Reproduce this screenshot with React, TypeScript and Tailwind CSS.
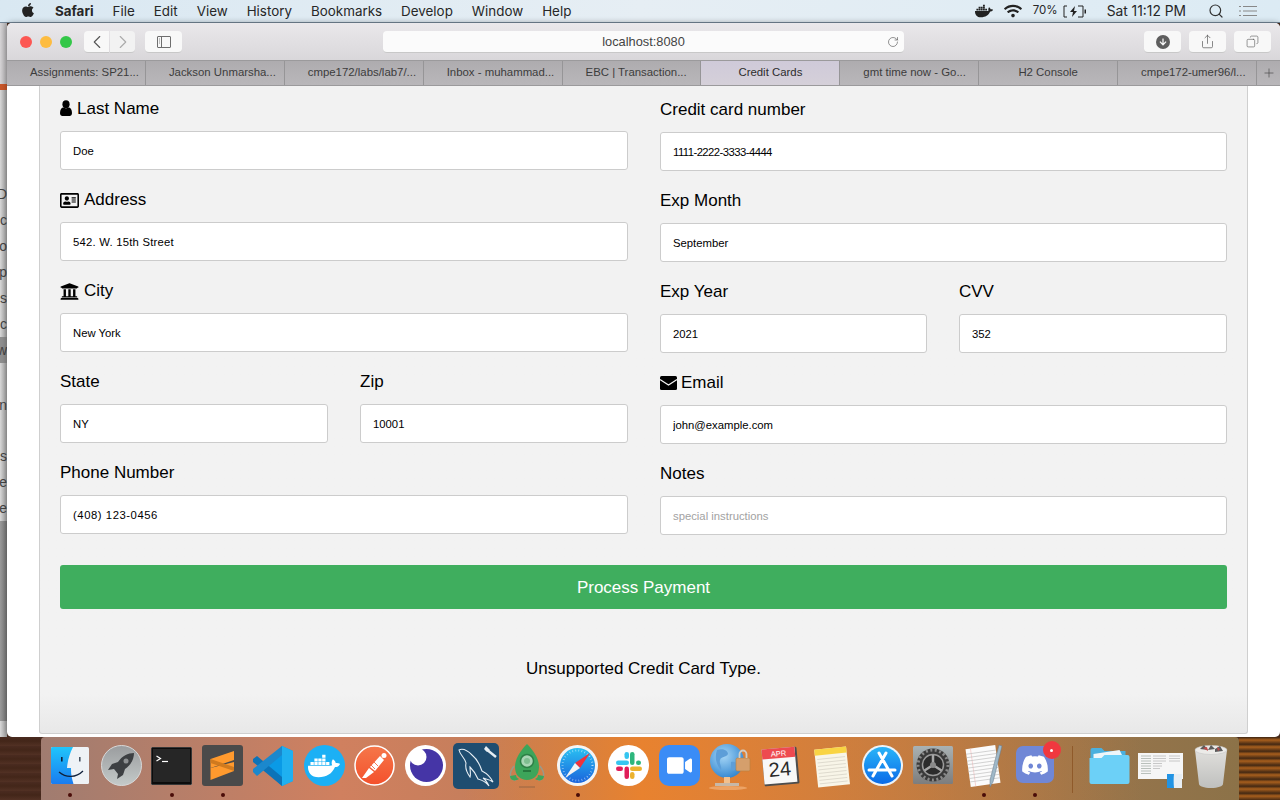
import { FaApple, FaRegAddressCard, FaUniversity, FaDocker, FaDiscord, FaVideo, FaWifi, FaArrowDown } from "react-icons/fa";
import { ChevronLeft, ChevronRight, RotateCw, Search, Share, Copy, Plus } from "lucide-react";
import type { ReactNode } from "react";

const font = "font-['Liberation_Sans',Arial,sans-serif]";

const menuItems = ["File", "Edit", "View", "History", "Bookmarks", "Develop", "Window", "Help"];

const tabs = [
  { label: "Assignments: SP21...", pad: true },
  { label: "Jackson Unmarsha...", pad: true },
  { label: "cmpe172/labs/lab7/...", pad: true },
  { label: "Inbox - muhammad...", pad: true },
  { label: "EBC | Transaction...", pad: true },
  { label: "Credit Cards", active: true },
  { label: "gmt time now - Go...", pad: true },
  { label: "H2 Console" },
  { label: "cmpe172-umer96/l...", pad: true },
];

const behindRows = [
  { text: "", h: 91 },
  { text: "rD", h: 26 },
  { text: "c", h: 26 },
  { text: "o", h: 26 },
  { text: "p", h: 26 },
  { text: "es", h: 26 },
  { text: "oc", h: 26 },
  { text: "ow", h: 26, dark: true },
  { text: "", h: 29 },
  { text: "n", h: 26 },
  { text: "", h: 25 },
  { text: "s", h: 26 },
  { text: "e", h: 26 },
  { text: "e", h: 26 },
];

function Field({ label, icon, value, placeholder, track = "" }: { label: string; icon?: ReactNode; value?: string; placeholder?: string; track?: string }) {
  return (
    <div className="min-w-0">
      <label className="flex h-6 items-center gap-[5px] pt-[2px] text-[17px] leading-6 text-black">
        {icon}
        {label}
      </label>
      <input
        readOnly
        value={value ?? ""}
        placeholder={placeholder}
        className={`mt-[11px] mb-[17px] block h-[39px] w-full rounded-[3px] border border-[#cccccc] bg-white px-3 text-[11.3px] text-black outline-none placeholder:text-[#a2a2a2] ${track}`}
      />
    </div>
  );
}

function Slot({ children, dot }: { children: ReactNode; dot?: boolean }) {
  return (
    <div className="relative flex h-[62px] w-[50.75px] shrink-0 items-start justify-center pt-[8px]">
      {children}
      {dot && <span className="absolute bottom-[2px] left-1/2 h-[4px] w-[4px] -translate-x-1/2 rounded-full bg-[#4a0c08]" />}
    </div>
  );
}

function UserGlyph() {
  return (
    <svg width="12" height="16" viewBox="0 0 12 16" className="-mt-[2px]">
      <ellipse cx="6" cy="4.200" rx="3.600" ry="4" fill="#000" />
      <path d="M0 13C0 9.500 1.500 7.500 3.500 7.500C4.500 8.500 7.500 8.500 8.500 7.500C10.500 7.500 12 9.500 12 13C12 15 11 16 9.500 16H2.500C1 16 0 15 0 13Z" fill="#000" />
    </svg>
  );
}

function MailGlyph() {
  return (
    <svg width="17" height="14" viewBox="0 0 17 14" className="-mt-[1px] -mr-px">
      <rect width="17" height="14" rx="1.500" fill="#000" />
      <path d="M0 3.500L8.500 9L17 3.500" fill="none" stroke="#f2f2f2" strokeWidth="1.200" />
    </svg>
  );
}

function Finder() {
  return (
    <svg width="38" height="37" viewBox="0 0 38 37" className="mt-[2px]">
      <defs>
        <linearGradient id="fb" x1="0" y1="0" x2="0" y2="1"><stop offset="0" stopColor="#20c5fb" /><stop offset="1" stopColor="#1a7cf0" /></linearGradient>
      </defs>
      <rect width="38" height="37" rx="1.500" fill="#eef2f6" />
      <path d="M0 1.500A1.500 1.500 0 0 1 1.500 0H22C18 8 16.500 15 16 21H20C19.800 27 21 32 22.500 37H1.500A1.500 1.500 0 0 1 0 35.500Z" fill="url(#fb)" />
      <path d="M8 25C15 31 25 31 32 24" fill="none" stroke="#10203a" strokeWidth="1.200" />
      <rect x="10" y="10" width="1.600" height="4.500" fill="#10203a" />
      <rect x="28" y="10" width="1.600" height="4.500" fill="#4b5563" />
    </svg>
  );
}

function Launchpad() {
  return (
    <svg width="41" height="41" viewBox="0 0 41 41">
      <defs>
        <linearGradient id="lp" x1="0" y1="0" x2="0" y2="1"><stop offset="0" stopColor="#9a9c9e" /><stop offset="1" stopColor="#c4cac9" /></linearGradient>
      </defs>
      <circle cx="20.500" cy="20.500" r="20" fill="url(#lp)" stroke="#d8d8d8" />
      <path d="M33 8C27 8 21 11 17 17L11 19L7 25L13 24L17 29L16 34L22 30L24 24C30 20 33 14 33 8Z" fill="#3d4043" />
      <circle cx="25" cy="16" r="2.500" fill="#8d9092" />
    </svg>
  );
}

function Terminal() {
  return (
    <svg width="41" height="38" viewBox="0 0 41 38" className="mt-[2px]">
      <rect width="41" height="38" rx="1.500" fill="#0c0c0c" stroke="#9a9a9a" strokeWidth="0.600" />
      <rect x="2" y="2" width="37" height="33" fill="#262626" />
      <path d="M5.500 9L9.500 11.500L5.500 14" fill="none" stroke="#fff" strokeWidth="1.200" />
      <path d="M11 14.500H17" stroke="#fff" strokeWidth="1.200" />
    </svg>
  );
}

function Sublime() {
  return (
    <svg width="41" height="41" viewBox="0 0 41 41">
      <rect width="41" height="41" rx="3" fill="#4a4a4a" />
      <path d="M8.500 14L32 6V15L8.500 23Z" fill="#ff9a2e" />
      <path d="M8.500 23L32 17V26L8.500 35Z" fill="#ff9a2e" />
      <path d="M8.500 14L32 22V26L8.500 18Z" fill="#d07a1e" />
    </svg>
  );
}

function VsCode() {
  return (
    <svg width="42" height="42" viewBox="0 0 42 42">
      <path d="M30 1L41 6V36L30 41L10 22Z" fill="#0a9ae6" />
      <path d="M30 1V41L41 36V6Z" fill="#1fb0f0" />
      <path d="M1 14L5 11L30 32V41L1 17Z" fill="#0c73b8" />
      <path d="M1 27L5 31L30 10V1L1 24Z" fill="#1b88cd" />
    </svg>
  );
}

function Docker() {
  return (
    <div className="flex h-[41px] w-[41px] items-center justify-center rounded-full bg-[#1cb0f5] text-white">
      <FaDocker size={32} />
    </div>
  );
}

function Postman() {
  return (
    <svg width="41" height="41" viewBox="0 0 41 41">
      <defs>
        <linearGradient id="pm" x1="0" y1="0" x2="0" y2="1"><stop offset="0" stopColor="#f5774a" /><stop offset="1" stopColor="#f4512c" /></linearGradient>
      </defs>
      <circle cx="20.500" cy="20.500" r="19.500" fill="url(#pm)" stroke="#fff" strokeWidth="1.500" />
      <circle cx="30" cy="10.500" r="2.500" fill="#fff" />
      <path d="M26 11L30 15L21 26L16 22ZM15 23L20 27L12 33L8 33Z" fill="#fff" />
      <path d="M20 17L24 21M17 20L21 24" stroke="#f4592f" strokeWidth="0.800" />
    </svg>
  );
}

function Lens() {
  return (
    <svg width="41" height="41" viewBox="0 0 41 41">
      <circle cx="20.500" cy="20.500" r="20.500" fill="#fff" />
      <circle cx="21.500" cy="20.500" r="16.500" fill="#4535a6" />
      <circle cx="13" cy="12" r="8.500" fill="#fff" />
    </svg>
  );
}

function MySqlIcon() {
  return (
    <svg width="46" height="46" viewBox="0 0 46 46" className="-mt-[2px]">
      <rect width="46" height="46" rx="5" fill="#1f4d70" />
      <path d="M6 7C10 5 15 8 19 12C24 16 27 22 29 28C33 30 37 33 40 39C36 36 33 36 30 35C33 37 35 41 36 43C33 39 29 37 25 36C23 31 20 27 17 24C17 28 18 31 17 34C14 30 12 25 13 20C12 15 7 12 6 7Z" fill="none" stroke="#e6eef4" strokeWidth="1.100" />
      <path d="M33 6L43 14" stroke="#e6eef4" strokeWidth="2.500" />
      <path d="M33 3L31 6L34 9L37 7Z" fill="#e6eef4" />
    </svg>
  );
}

function Rocket() {
  return (
    <svg width="40" height="47" viewBox="0 0 40 47" className="-mt-[1px]">
      <path d="M7 22C1 30 3 36 9 36M33 22C39 30 37 36 31 36" fill="none" stroke="#9a9a88" strokeWidth="1.500" />
      <path d="M20 0C27 7 32 15 32 23C32 31 27 36 20 36C13 36 8 31 8 23C8 15 13 7 20 0Z" fill="#3da55a" />
      <circle cx="20" cy="17" r="6.500" fill="#a9d6b4" stroke="#2d7f45" strokeWidth="1.500" />
      <circle cx="20" cy="17" r="3" fill="#7fbe90" />
      <path d="M16 27H24" stroke="#1f6b36" strokeWidth="1.500" />
      <path d="M3 32C3 36 7 38 12 35C10 34 9 33 9 31ZM37 32C37 36 33 38 28 35C30 34 31 33 31 31Z" fill="#3da55a" />
      <path d="M12 43H28" stroke="#9f6b45" strokeWidth="1.200" />
    </svg>
  );
}

function Safari() {
  return (
    <svg width="41" height="41" viewBox="0 0 41 41">
      <defs>
        <linearGradient id="sf" x1="0" y1="0" x2="0" y2="1"><stop offset="0" stopColor="#2ac0f2" /><stop offset="1" stopColor="#1a64dc" /></linearGradient>
      </defs>
      <circle cx="20.500" cy="20.500" r="20.500" fill="#f4f4f4" />
      <circle cx="20.500" cy="20.500" r="17.500" fill="url(#sf)" />
      <circle cx="20.500" cy="20.500" r="15" fill="none" stroke="#fff" strokeWidth="2" strokeDasharray="0.600 2.500" opacity="0.700" />
      <path d="M33 8L18 18L23 23Z" fill="#f0323c" />
      <path d="M8 33L18 18L23 23Z" fill="#f4f4f4" />
    </svg>
  );
}

function Slack() {
  return (
    <svg width="41" height="41" viewBox="0 0 41 41">
      <circle cx="20.500" cy="20.500" r="20.500" fill="#fff" />
      <rect x="8" y="15.500" width="13" height="4.500" rx="2.250" fill="#35c5f0" />
      <rect x="16.500" y="7" width="4.500" height="7" rx="2.250" fill="#35c5f0" />
      <rect x="22" y="7" width="4.500" height="13" rx="2.250" fill="#2eb67d" />
      <rect x="28" y="15.500" width="5" height="4.500" rx="2.250" fill="#2eb67d" />
      <rect x="22" y="21.500" width="12" height="4.500" rx="2.250" fill="#ecb22e" />
      <rect x="22" y="27" width="4.500" height="7" rx="2.250" fill="#ecb22e" />
      <rect x="16.500" y="21.500" width="4.500" height="12.500" rx="2.250" fill="#e01e5a" />
      <rect x="8" y="21.500" width="7" height="4.500" rx="2.250" fill="#e01e5a" />
    </svg>
  );
}

function ZoomIcon() {
  return (
    <div className="flex h-[41px] w-[41px] items-center justify-center rounded-[10px] bg-[#3a8cf6] text-white">
      <FaVideo size={25} />
    </div>
  );
}

function Globe() {
  return (
    <svg width="42" height="46" viewBox="0 0 42 46" className="-mt-[1px]">
      <defs>
        <radialGradient id="gl" cx="0.400" cy="0.350" r="0.700"><stop offset="0" stopColor="#a6d6f6" /><stop offset="1" stopColor="#2f84cf" /></radialGradient>
      </defs>
      <ellipse cx="19" cy="44" rx="19" ry="2" fill="#f2b27a" opacity="0.700" />
      <circle cx="18" cy="17" r="17" fill="url(#gl)" />
      <path d="M8 6C13 4 19 6 19 10C17 14 12 12 11 16C10 20 13 22 12 26C8 22 5 14 8 6ZM22 18C27 17 28 20 27 24C26 28 23 27 22 24Z" fill="#5d9ed8" />
      <rect x="15" y="33" width="6" height="7" fill="#f3c08c" />
      <rect x="6" y="39" width="24" height="3" fill="#c7b8a8" />
      <rect x="27" y="14" width="14" height="13" rx="1.500" fill="#d59f6c" stroke="#b9803f" strokeWidth="0.600" />
      <path d="M30.500 14V10A3.500 3.500 0 0 1 37.500 10V14" fill="none" stroke="#d2cdc4" strokeWidth="1.800" />
    </svg>
  );
}

function Calendar() {
  return (
    <svg width="40" height="42" viewBox="0 0 40 42">
      <g transform="rotate(-5 20 21)">
        <rect x="2" y="3" width="35" height="37" rx="1.500" fill="#4d4d4d" />
        <rect x="2" y="3" width="33" height="35" fill="#f8f8f8" />
        <rect x="2" y="3" width="33" height="10" fill="#ee4a50" />
        <text x="18.500" y="11" textAnchor="middle" fontSize="7.500" fill="#fff" fontFamily="Liberation Sans, sans-serif">APR</text>
        <text x="18.500" y="31" textAnchor="middle" fontSize="20" fill="#2a2a2a" fontFamily="Liberation Sans, sans-serif">24</text>
      </g>
    </svg>
  );
}

function Notes() {
  return (
    <svg width="38" height="43" viewBox="0 0 38 43">
      <g transform="rotate(-6 19 21)">
        <rect x="3" y="3" width="32" height="38" fill="#f8f5e8" />
        <rect x="3" y="3" width="32" height="6" fill="#f9d443" />
        <path d="M5 13H33M5 16.500H33M5 20H33M5 23.500H33M5 27H33M5 30.500H33M5 34H33M5 37.500H33" stroke="#d4d0c4" strokeWidth="0.700" />
      </g>
    </svg>
  );
}

function AppStore() {
  return (
    <svg width="41" height="41" viewBox="0 0 41 41">
      <defs>
        <linearGradient id="as" x1="0" y1="0" x2="0" y2="1"><stop offset="0" stopColor="#29b5f8" /><stop offset="1" stopColor="#0a6ae8" /></linearGradient>
      </defs>
      <circle cx="20.500" cy="20.500" r="20.500" fill="#eef3f7" />
      <circle cx="20.500" cy="20.500" r="18.500" fill="url(#as)" />
      <path d="M24 8L11 31M17 8L30 31M7 25H33" stroke="#fff" strokeWidth="3" strokeLinecap="round" />
    </svg>
  );
}

function SysPrefs() {
  return (
    <svg width="40" height="38" viewBox="0 0 40 38" className="mt-[1px]">
      <defs>
        <linearGradient id="sp" x1="0" y1="0" x2="0" y2="1"><stop offset="0" stopColor="#a9b2b4" /><stop offset="1" stopColor="#7d7d7d" /></linearGradient>
      </defs>
      <rect width="40" height="38" rx="1.500" fill="url(#sp)" />
      <circle cx="20" cy="19" r="16.500" fill="#3a3a3a" />
      <circle cx="20" cy="19" r="15" fill="none" stroke="#8a8a8a" strokeWidth="3" strokeDasharray="2 2.500" />
      <circle cx="20" cy="19" r="10.500" fill="#2c2c2c" stroke="#9a9a9a" strokeWidth="1.500" />
      <path d="M20 19V9M20 19L11.500 24.500M20 19L28.500 24.500" stroke="#a8a8a8" strokeWidth="2.500" />
      <circle cx="20" cy="19" r="3" fill="#8a8a8a" />
    </svg>
  );
}

function TextEdit() {
  return (
    <svg width="40" height="44" viewBox="0 0 40 44" className="-mt-[1px]">
      <g transform="rotate(-8 19 22)">
        <rect x="4" y="3" width="30" height="38" fill="#fbfbfb" />
        <path d="M9 3V41" stroke="#f2bcbc" strokeWidth="0.600" />
        <path d="M4 8H34M4 11.500H34M4 15H34M4 18.500H34M4 22H34M4 25.500H34M4 29H34M4 32.500H34M4 36H34" stroke="#b9b9b9" strokeWidth="0.600" />
      </g>
      <path d="M35 1L38 2L29 38L26 43L26 36Z" fill="#9fb8c8" stroke="#66788a" strokeWidth="0.500" />
    </svg>
  );
}

function DiscordIcon() {
  return (
    <div className="relative mt-px flex h-[37px] w-[38px] items-center justify-center rounded-[7px] bg-[#7087d6] text-white">
      <FaDiscord size={28} />
      <span className="absolute -top-[5px] -right-[7px] flex h-[18px] w-[18px] items-center justify-center rounded-full bg-[#f0383f]">
        <span className="h-[3px] w-[3px] rounded-full bg-white" />
      </span>
    </div>
  );
}

function Folder() {
  return (
    <svg width="41" height="38" viewBox="0 0 40 38" className="mt-[1px]">
      <path d="M1 8V4A2 2 0 0 1 3 2H12L15 5H36V12H1Z" fill="#4bb0de" />
      <path d="M4 8L30 4L34 12H4Z" fill="#eef6fa" />
      <path d="M0 12H12L15 9H38A2 2 0 0 1 40 11V36A2 2 0 0 1 38 38H2A2 2 0 0 1 0 36Z" fill="#6cd0f7" />
    </svg>
  );
}

function PreviewDoc() {
  return (
    <svg width="45" height="43" viewBox="0 0 45 43">
      <rect x="0" y="8" width="45" height="26" fill="#f6f6f6" />
      <path d="M3 11H13M3 13.500H13M3 16H13M3 18.500H13M3 21H13M3 23.500H13M3 26H13M3 28.500H13" stroke="#aab2ac" strokeWidth="0.800" />
      <path d="M15 11H28M15 13.500H28M15 16H28M15 18.500H24M15 21H24M15 23.500H22M31 11H42M31 13.500H42M31 16H42" stroke="#bcbcbc" strokeWidth="0.800" />
      <rect x="29" y="29" width="15" height="14" fill="#e8eef3" />
      <path d="M29 29H36C35.500 33 35.500 38 36 43H29Z" fill="#2294e4" />
    </svg>
  );
}

function Trash() {
  return (
    <svg width="34" height="44" viewBox="0 0 34 44" className="-mt-[1px]">
      <defs>
        <linearGradient id="tr" x1="0" y1="0" x2="0" y2="1"><stop offset="0" stopColor="#e0dfdc" /><stop offset="1" stopColor="#bfc0be" /></linearGradient>
      </defs>
      <path d="M1 6L5 40C5 42 10 44 17 44C24 44 29 42 29 40L33 6Z" fill="url(#tr)" />
      <ellipse cx="17" cy="6" rx="16" ry="4.500" fill="#ecebe8" stroke="#c6c6c6" strokeWidth="0.600" />
      <path d="M6 5L10 1L14 6ZM14 6L17 1L21 5ZM21 5L26 2L29 7L21 8Z" fill="#5c5c5c" />
      <path d="M9 4L13 3L14 7ZM23 3L26 5L24 7Z" fill="#c44a4a" />
    </svg>
  );
}

function BatteryIcon() {
  return (
    <svg width="24" height="13" viewBox="0 0 24 13">
      <path d="M4 1H1V12H4M15 1H20V12H15" fill="none" stroke="#222" strokeWidth="1" />
      <path d="M12 1L7 7H10L9 12L14 6H11Z" fill="#222" />
      <rect x="21.500" y="4.500" width="1.500" height="4" fill="#222" />
    </svg>
  );
}

function SidebarGlyph() {
  return (
    <svg width="14" height="12" viewBox="0 0 14 12">
      <rect x="0.500" y="0.500" width="13" height="11" rx="0.500" fill="none" stroke="#6e6e6e" />
      <path d="M4.500 0.500V11.500" stroke="#6e6e6e" />
      <path d="M2 3H3M2 5H3M2 7H3" stroke="#8a8a8a" />
    </svg>
  );
}

export default function App() {
  return (
    <div className={`${font} flex h-[800px] w-[1280px] flex-col overflow-hidden bg-[#4a2d20]`}>
      {/* mac menu bar */}
      <div className="flex h-[23px] shrink-0 items-center border-b border-[#76899a] bg-gradient-to-r from-[#d9e8f2] via-[#e6eef4] to-[#dcebf4] pr-[23px] pl-[20px] font-['Inter',sans-serif] text-[13.4px] text-[#272727]">
        <FaApple size={16} className="-mt-[2px] mr-[19px] text-[#222]" />
        <span className="mr-[19px] font-bold">Safari</span>
        <div className="flex gap-[19px]">
          {menuItems.map((m) => (
            <span key={m}>{m}</span>
          ))}
        </div>
        <div className="ml-auto flex items-center">
          <FaDocker size={18} className="mr-[11px] text-[#222]" />
          <FaWifi size={18} className="mr-[11px] text-[#222]" />
          <span className="mr-[5px] text-[11.5px]">70%</span>
          <BatteryIcon />
          <span className="mr-[22px] ml-[20px] text-[13.8px]">Sat 11:12 PM</span>
          <Search size={16} strokeWidth={1.8} className="mr-[15px] text-[#333]" />
          <svg width="18" height="12" viewBox="0 0 18 12">
            <path d="M0 1.500H2M4 1.500H18M0 6H2M4 6H18M0 10.500H2M4 10.500H18" stroke="#888" strokeWidth="1" />
          </svg>
        </div>
      </div>

      <div className="flex h-[714px] shrink-0">
        {/* other window peeking out on the left */}
        <div className="w-[7px] shrink-0 overflow-hidden bg-gradient-to-r from-[#d8d8d8] to-[#a0a0a0] text-[14px] text-[#444]">
          <div className="h-[61px] bg-gradient-to-r from-[#d6d4d6] to-[#b2b0b2]" />
          <div className="h-[6px] bg-[#c9572a]" />
          {behindRows.map((r, i) => (
            <div key={i} style={{ height: r.h }} className={`flex items-center justify-end whitespace-nowrap ${r.dark ? "bg-[#8f8f8f]" : ""}`}>
              {r.text}
            </div>
          ))}
          <div className="h-[200px] bg-gradient-to-r from-[#9a9a9a] to-[#777777]" />
        </div>

        {/* safari window */}
        <div className="flex min-w-0 flex-1 flex-col overflow-hidden rounded-t-[5px] rounded-b-[5px] bg-white shadow-[0_0_6px_rgba(0,0,0,0.35)]">
          <div className="flex h-[37px] shrink-0 items-center bg-gradient-to-b from-[#eae8eb] to-[#d9d7da] pt-[1px]">
            <span className="ml-[13px] h-3 w-3 rounded-full bg-[#fc5753]" />
            <span className="ml-2 h-3 w-3 rounded-full bg-[#fdbc40]" />
            <span className="ml-2 h-3 w-3 rounded-full bg-[#33c748]" />
            <div className="ml-[12px] flex gap-px">
              <div className="flex h-[22px] w-[25px] items-center justify-center rounded-l-[4px] border-b border-[#c8c8c8] bg-[#f8f8f8]">
                <ChevronLeft size={22} strokeWidth={1.2} className="text-[#555]" />
              </div>
              <div className="flex h-[22px] w-[25px] items-center justify-center rounded-r-[4px] border-b border-[#c8c8c8] bg-[#f2f2f2]">
                <ChevronRight size={22} strokeWidth={1.2} className="text-[#aaa]" />
              </div>
            </div>
            <div className="ml-[10px] flex h-[22px] w-[37px] items-center justify-center rounded-[4px] border-b border-[#c8c8c8] bg-[#f8f8f8]">
              <SidebarGlyph />
            </div>
            <div className="relative ml-[201px] flex h-[22px] w-[521px] items-center justify-center rounded-[4px] border-b border-[#c8c8c8] bg-[#fbfbfb] text-[12.8px] text-[#444]">
              localhost:8080
              <RotateCw size={12} strokeWidth={1.4} className="absolute right-[5px] text-[#666]" />
            </div>
            <div className="ml-[240px] flex gap-2">
              <div className="flex h-[22px] w-[37px] items-center justify-center rounded-[4px] border-b border-[#c8c8c8] bg-[#f8f8f8]">
                <span className="flex h-[14px] w-[14px] items-center justify-center rounded-full bg-[#5e5e5e] text-[#f8f8f8]">
                  <FaArrowDown size={8} />
                </span>
              </div>
              <div className="flex h-[22px] w-[37px] items-center justify-center rounded-[4px] border-b border-[#c8c8c8] bg-[#f8f8f8]">
                <Share size={15} strokeWidth={1.1} className="text-[#555]" />
              </div>
              <div className="flex h-[22px] w-[37px] items-center justify-center rounded-[4px] border-b border-[#c8c8c8] bg-[#f8f8f8]">
                <Copy size={13} strokeWidth={1.1} className="-scale-x-100 text-[#555]" />
              </div>
            </div>
          </div>

          <div className="flex h-[26px] shrink-0 border-y border-[#9b9a9c] bg-gradient-to-b from-[#aeacaf] to-[#b9b7ba] text-[11.4px] text-[#3c3c3c]">
            <div className="grid w-[1250px] shrink-0 grid-cols-9">
              {tabs.map((t) => (
                <div
                  key={t.label}
                  className={`flex min-w-0 items-center overflow-hidden border-r border-[#969597] whitespace-nowrap ${t.pad ? "pl-[23px]" : "justify-center"} ${t.active ? "bg-gradient-to-b from-[#cfcad9] to-[#d5d0d9] text-[#2c2c2c]" : ""}`}
                >
                  {t.label}
                </div>
              ))}
            </div>
            <div className="flex flex-1 items-center justify-center text-[#444]">
              <Plus size={14} strokeWidth={1.1} />
            </div>
          </div>

          {/* page */}
          <div className="flex min-h-0 flex-1 pr-[32px] pb-[3px] pl-[32px]">
            <div className="flex-1 overflow-hidden rounded-b-[3px] border-x border-b border-[#cfcfcf] bg-gradient-to-b from-[#f2f2f2] from-[94%] to-[#e8e8e8] px-5 pt-[10px]">
              <div className="grid grid-cols-[568px_567px] gap-x-8">
                <div>
                  <Field label="Last Name" icon={<UserGlyph />} value="Doe" />
                  <Field label="Address" icon={<FaRegAddressCard size={19} />} value="542. W. 15th Street" track="tracking-[0.22px]" />
                  <Field label="City" icon={<FaUniversity size={19} />} value="New York" />
                  <div className="grid grid-cols-2 gap-8">
                    <Field label="State" value="NY" />
                    <Field label="Zip" value="10001" />
                  </div>
                  <Field label="Phone Number" value="(408) 123-0456" track="tracking-[0.55px]" />
                </div>
                <div className="pt-px">
                  <Field label="Credit card number" value="1111-2222-3333-4444" track="tracking-[-0.55px]" />
                  <Field label="Exp Month" value="September" />
                  <div className="grid grid-cols-[267px_268px] gap-8">
                    <Field label="Exp Year" value="2021" />
                    <Field label="CVV" value="352" />
                  </div>
                  <Field label="Email" icon={<MailGlyph />} value="john@example.com" />
                  <Field label="Notes" placeholder="special instructions" />
                </div>
              </div>
              <button className="mt-[13px] block h-[44px] w-full rounded-[3px] bg-[#3fae5e] pt-[2px] text-[17px] text-white">Process Payment</button>
              <p className="mt-[48px] text-center text-[17px] leading-6 text-black">Unsupported Credit Card Type.</p>
            </div>
          </div>
        </div>
      </div>

      {/* wallpaper + dock */}
      <div className="flex h-[63px] shrink-0 bg-[repeating-linear-gradient(180deg,#4a2b20_0px,#432619_4px,#523124_9px)]">
        <div className="w-[41px] shrink-0" />
        <div className="flex w-[1198px] shrink-0 rounded-t-[4px] bg-gradient-to-r from-[#a07c70] via-[#d0805f] via-25% to-[#8c7248] pl-[4px]">
          <div className="flex w-full rounded-t-[4px] bg-gradient-to-r from-transparent from-35% via-[#e8822f] via-50% to-transparent to-[92%]">
            <Slot dot><Finder /></Slot>
            <Slot><Launchpad /></Slot>
            <Slot dot><Terminal /></Slot>
            <Slot dot><Sublime /></Slot>
            <Slot><VsCode /></Slot>
            <Slot><Docker /></Slot>
            <Slot><Postman /></Slot>
            <Slot><Lens /></Slot>
            <Slot><MySqlIcon /></Slot>
            <Slot><Rocket /></Slot>
            <Slot dot><Safari /></Slot>
            <Slot><Slack /></Slot>
            <Slot><ZoomIcon /></Slot>
            <Slot><Globe /></Slot>
            <Slot><Calendar /></Slot>
            <Slot><Notes /></Slot>
            <Slot><AppStore /></Slot>
            <Slot><SysPrefs /></Slot>
            <Slot dot><TextEdit /></Slot>
            <Slot dot><DiscordIcon /></Slot>
            <div className="flex w-[24px] shrink-0 justify-center pt-[9px]">
              <div className="h-[47px] w-px bg-[#8f5a2a]" />
            </div>
            <Slot><Folder /></Slot>
            <Slot><PreviewDoc /></Slot>
            <Slot><Trash /></Slot>
          </div>
        </div>
        <div className="flex-1 bg-[repeating-linear-gradient(180deg,#3b2412_0px,#a85f1d_3px,#4a2c14_7px)]" />
      </div>
    </div>
  );
}
